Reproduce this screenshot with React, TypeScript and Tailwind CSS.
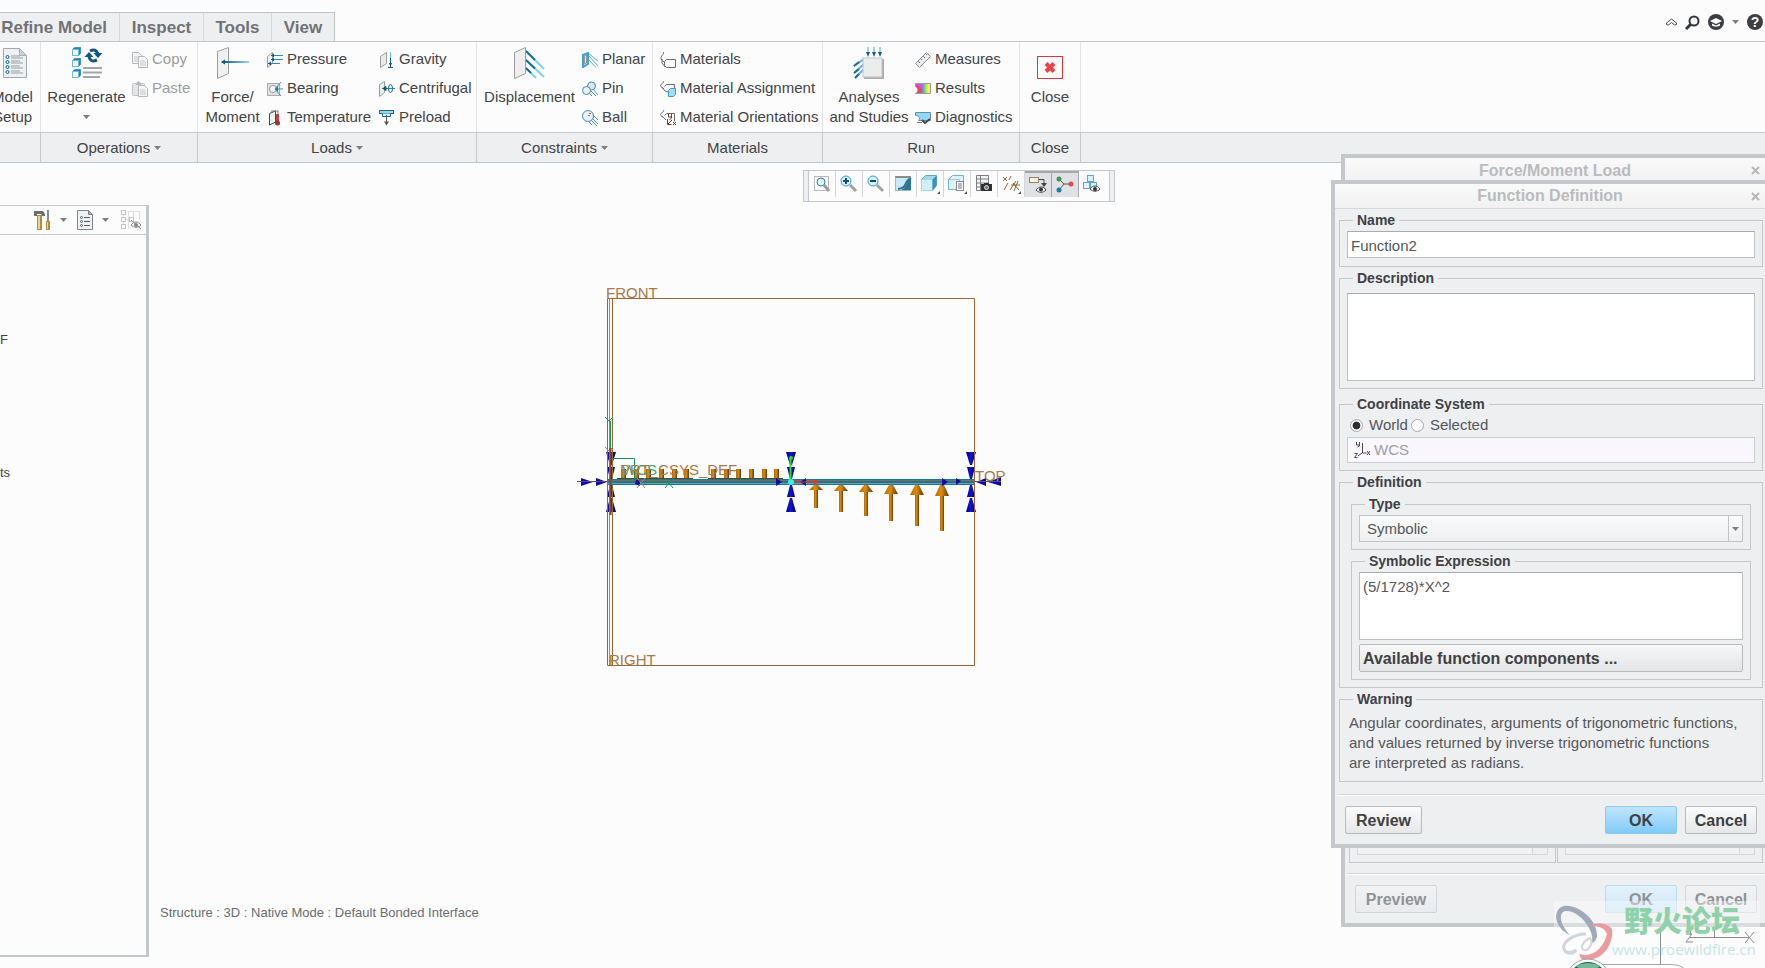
import type { ReactNode } from 'react';
import { clsx } from 'clsx';

const FONT = "font-['Liberation_Sans',Arial,sans-serif]";

/* ---------- small shared pieces ---------- */

function Caret({ className }: { className?: string }) {
  return (
    <svg width="7" height="4" viewBox="0 0 7 4" className={className} aria-hidden="true">
      <path d="M0 0h7L3.500 4z" fill="#7c7e80" />
    </svg>
  );
}

function Svg({ size = 16, children }: { size?: number; children: ReactNode }) {
  return (
    <svg width={size} height={size} viewBox={`0 0 ${size} ${size}`} fill="none" className="shrink-0" aria-hidden="true">
      {children}
    </svg>
  );
}

/* ---------- large ribbon icons ---------- */

const ModelSetupIcon = () => (
  <Svg size={32}>
    <path d="M6.500 1.500h16l7 7v22h-23z" fill="#eef1f4" stroke="#a4a8ac" />
    <path d="M22.500 1.500v7h7z" fill="#c3d6e2" stroke="#a4b4be" />
    {[10, 15, 20, 25].map((y) => (
      <g key={y}>
        <circle cx="10.500" cy={y} r="1.500" stroke="#0d5f8c" />
        <path d={`M14 ${y - 1}h9M14 ${y + 1}h12`} stroke="#9b9da0" />
      </g>
    ))}
  </Svg>
);

const RegenerateIcon = () => (
  <Svg size={32}>
    {[1, 12, 23].map((y) => (
      <g key={y}>
        <path d={`M1.500 ${y + 1.5}l2-2h6v6l-2 2`} fill="#2c84ad" stroke="#3b96c0" />
        <rect x="1.500" y={y + 1.5} width="6" height="6" fill="#eef9fe" stroke="#6dbbdc" />
      </g>
    ))}
    <path d="M19 4q6-3 8 3M26 13q-7 3-8-4" stroke="#12597f" strokeWidth="3" />
    <path d="M22.500 6h9L27 11zM13.500 10h9L18 5z" fill="#12597f" />
    <path d="M12 21h19M12 25.500h19M12 30h17" stroke="#a3a5a7" strokeWidth="2" />
  </Svg>
);

const ForceIcon = () => (
  <Svg size={32}>
    <defs>
      <linearGradient id="forceShaft" x1="0" x2="1">
        <stop offset="0" stopColor="#0d5678" />
        <stop offset="1" stopColor="#8fdcff" />
      </linearGradient>
    </defs>
    <path d="M.5 4.500l11-4v26l-11 5z" fill="#f0f0f1" stroke="#9a9c9e" />
    <rect x="5" y="14" width="27" height="2" fill="url(#forceShaft)" />
    <path d="M4 15l4-2.500v5z" fill="#0d5678" />
  </Svg>
);

const DisplacementIcon = () => (
  <Svg size={32}>
    <path d="M12 4l18 18M12 13l18 17M12 21l10 10" stroke="#7fcff3" strokeWidth="2" />
    <path d="M12 4l9 9M12 13l9 8.500M12 21l5 5" stroke="#1a6f97" strokeWidth="2" />
    <path d="M.5 5.500l11-5v26l-11 5z" fill="#eeeeef" stroke="#9a9c9e" />
  </Svg>
);

const AnalysesIcon = () => (
  <Svg size={32}>
    <path d="M1 19l10-7M1 26l10-9M2 31l9-9" stroke="#5fb2d8" strokeWidth="2" />
    <path d="M1 19l5-4M1 26l5-4M2 31l4-4" stroke="#1a6f97" strokeWidth="2" />
    {[15, 21, 27].map((x) => (
      <g key={x}>
        <path d={`M${x} 0v6`} stroke="#4ea4cc" />
        <path d={`M${x - 2} 5h4l-2 5z`} fill="#125f88" />
      </g>
    ))}
    <rect x="11" y="12" width="20" height="20" fill="#a9abad" />
    <rect x="10" y="11" width="19" height="19" fill="#ececed" stroke="#c2c4c6" />
  </Svg>
);

const CloseIcon = () => (
  <Svg size={32}>
    <rect x="3.500" y="9.500" width="25" height="22" fill="#fcfcfc" stroke="#d9393d" />
    <path d="M12 16.500l8 8M20 16.500l-8 8" stroke="#e84348" strokeWidth="4" />
  </Svg>
);

/* ---------- 16px ribbon icons ---------- */

const Page = ({ x = 0, y = 0 }: { x?: number; y?: number }) => (
  <g transform={`translate(${x} ${y})`}>
    <path d="M.5.5h6l3 3v8h-9z" fill="#f6f6f7" stroke="#b4b6b8" />
    <path d="M2 5h5M2 7h6M2 9h6" stroke="#c4c6c8" />
  </g>
);

const CopyIcon = () => (
  <Svg>
    <Page />
    <Page x={6} y={4} />
  </Svg>
);

const PasteIcon = () => (
  <Svg>
    <rect x=".5" y="2.500" width="12" height="12" rx="1" fill="#e4e5e6" stroke="#c0c2c4" />
    <path d="M4 4V2l2.500-2L9 2v2z" fill="#b8babc" />
    <Page x={6} y={4} />
  </Svg>
);

const PressureIcon = () => (
  <Svg>
    <path d="M.5 4.500l5-4v11l-5 4z" fill="#eee" stroke="#9a9c9e" />
    <path d="M4 3.500h12M4 7.500h12M1 11.500h12" stroke="#2d8bb6" />
    <path d="M4 3.500l3-2v4zM4 7.500l3-2v4zM1 11.500l3-2v4z" fill="#0f5577" />
  </Svg>
);

const BearingIcon = () => (
  <Svg>
    <rect x=".5" y="2.500" width="12" height="12" fill="#dfe0e2" stroke="#acaeb0" />
    <circle cx="6" cy="8" r="3.500" fill="#f8f8f8" stroke="#9a9c9e" />
    <path d="M8 8l6-7M8 8h8M8 8l6 7" stroke="#3695c0" />
    <path d="M8 8l3-3v6z" fill="#2b7ca3" />
  </Svg>
);

const TemperatureIcon = () => (
  <Svg>
    <path d="M2.500 3.500l6-2.500v11l-6 3z" fill="#f0f0f0" stroke="#155d80" />
    <path d="M4 1h7v3" stroke="#777" />
    <rect x="9" y="4" width="3" height="9" fill="#bb4740" />
    <circle cx="10.500" cy="13" r="2.500" fill="#a5332d" />
  </Svg>
);

const GravityIcon = () => (
  <Svg>
    <path d="M1.500 4.500l6-4v11l-6 4z" fill="#e9eaeb" stroke="#9a9c9e" />
    <path d="M11.500 0v10" stroke="#6cc0e8" />
    <path d="M11.500 6v9M9 15.500h5" stroke="#0f5577" />
    <path d="M10 11h3l-1.500 4z" fill="#0f5577" />
  </Svg>
);

const CentrifugalIcon = () => (
  <Svg>
    <path d="M.5 3.500l5-3v11l-5 4z" fill="#eee" stroke="#9a9c9e" />
    <path d="M3 7.500h13" stroke="#2d8bb6" />
    <path d="M4 7.500l3-2v4z" fill="#0f5577" stroke="#0f5577" />
    <ellipse cx="11.500" cy="7.500" rx="2" ry="4" stroke="#0f6a96" />
  </Svg>
);

const PreloadIcon = () => (
  <Svg>
    <rect x=".5" y=".5" width="14" height="3" fill="#9bd4ee" stroke="#176a92" />
    <path d="M3.500 3.500v3h8v-3" fill="#d8effa" stroke="#176a92" />
    <path d="M7.500 5v9" stroke="#555" />
    <path d="M5 11.500h5l-2.500 4z" fill="#555" />
  </Svg>
);

const PlanarIcon = () => (
  <Svg>
    <path d="M6 3l10 11M6 7l8 8.500M6 1l10 8" stroke="#4fb0dd" />
    <path d="M1 3l5-2v11l-5 3z" fill="#ddd" stroke="#3fa4d4" strokeWidth="2" />
    <path d="M2.500 4l2-1v8l-2 1z" fill="#ddd" stroke="#999" />
  </Svg>
);

const PinIcon = () => (
  <Svg>
    <path d="M8 9l6 6M11 8l5 6M5 10l5 5" stroke="#3b9ccb" />
    <circle cx="9.500" cy="5" r="4" fill="#dfe5e9" stroke="#3c8db4" />
    <circle cx="4.500" cy="9.500" r="4" fill="#eef1f3" stroke="#3c8db4" />
  </Svg>
);

const BallIcon = () => (
  <Svg>
    <path d="M10 8l6 6M9 10l6 6M6 11l4 4M12 6l4 4" stroke="#3b9ccb" />
    <circle cx="6" cy="6" r="5.500" fill="#eceff1" stroke="#3c8db4" />
    <path d="M7 3.500h2M6 5.500h2" stroke="#777" />
  </Svg>
);

const MaterialsIcon = () => (
  <Svg>
    <path d="M3.500 0c1 2-2 3-2.500 5.500S3 8.500 4 10M2 7v4l3 4" stroke="#6a6c6e" />
    <path d="M4.500 9.500l2-2h9v8h-9l-2-2z" fill="#fff" stroke="#6a6c6e" />
  </Svg>
);

const MaterialAssignIcon = () => (
  <Svg>
    <path d="M3.500 0c1 2-3 3-3 4.500S3 7 4 8M4.500 5.500l2-2h8v6M2 6l3 4 3 1" stroke="#6a6c6e" />
    <path d="M8.500 9.500l2-2h5v6l-2 2h-5z" fill="#9fdcf6" stroke="#3f9bc4" />
  </Svg>
);

const MaterialOrientIcon = () => (
  <Svg>
    <path d="M3.500 0c1 2-3 3-3 4.500S3 7 4 8M4.500 5.500l2-2h8v8M2 6l4 4" stroke="#6a6c6e" />
    <path d="M8.500 4v3h3M11.500 4v4l-2 2M7.500 9v5.500h4M8 14l4-4" stroke="#5a4326" />
    <path d="M13 12l3 3M16 12l-3 3" stroke="#444" />
  </Svg>
);

const MeasuresIcon = () => (
  <Svg>
    <path d="M.5 11.500l11-11 4 4-11 11z" fill="#e9eaec" stroke="#8f9193" />
    <path d="M3 9l2 2M5.500 6.500l1.500 1.500M8 4l2 2M10.500 1.500L12 3" stroke="#7a7c7e" />
  </Svg>
);

const ResultsIcon = () => (
  <Svg>
    <defs>
      <linearGradient id="fringe" x1="0" x2="1">
        <stop offset=".3" stopColor="#f23fd8" />
        <stop offset=".5" stopColor="#6c8df0" />
        <stop offset=".65" stopColor="#7fe36a" />
        <stop offset=".85" stopColor="#fdf04a" />
      </linearGradient>
    </defs>
    <path d="M.5 2.500h15v10H.500c3-2 3-5 0-7z" fill="url(#fringe)" stroke="#9a9c9e" />
    <path d="M1 5h2c4 1 5 4 3 7H2c2-2 2-4-1-7z" fill="#e64b5c" />
  </Svg>
);

const DiagnosticsIcon = () => (
  <Svg>
    <path d="M.5 2.500h15v8h-12c2-2 1-5-3-5z" fill="#8ed8f8" stroke="#6f8fa0" />
    <path d="M2 12.500h5" stroke="#777" />
    <path d="M7 10l3 3 5-4" stroke="#45484b" strokeWidth="2" />
  </Svg>
);

/* ---------- ribbon ---------- */

function BigButton({ icon, lines, caret, className }: { icon: ReactNode; lines: string[]; caret?: boolean; className?: string }) {
  return (
    <button type="button" className={clsx('flex shrink-0 flex-col items-center pt-[5px]', className)}>
      {icon}
      <span className="mt-2 flex flex-col items-center leading-5 whitespace-nowrap">
        {lines.map((l) => (
          <span key={l}>{l}</span>
        ))}
      </span>
      {caret && <Caret className="mt-2" />}
    </button>
  );
}

type Item = { icon: ReactNode; label: string; disabled?: boolean };

function SmallColumn({ items, className }: { items: Item[]; className?: string }) {
  return (
    <div className={clsx('flex shrink-0 flex-col pt-[3px]', className)}>
      {items.map((it) => (
        <button
          key={it.label}
          type="button"
          disabled={it.disabled}
          className="flex h-[29px] items-center gap-1 whitespace-nowrap disabled:text-[#9b9c9e]"
        >
          {it.icon}
          {it.label}
        </button>
      ))}
    </div>
  );
}

function Group({ label, menu, className, children }: { label?: string; menu?: boolean; className?: string; children: ReactNode }) {
  return (
    <section className={clsx('flex shrink-0 flex-col', className)} aria-label={label}>
      <div className="flex h-[90px] border-r border-[#e1e3e5]">{children}</div>
      <div className="flex h-[30px] items-center justify-center gap-1 border-t border-r border-[#c6cacd] bg-[#eeeff1] pt-px">
        {label}
        {menu && <Caret />}
      </div>
    </section>
  );
}

const TABS = [
  { label: 'Refine Model', className: 'w-[120px] pr-3 justify-end' },
  { label: 'Inspect', className: 'w-[84px] justify-center' },
  { label: 'Tools', className: 'w-[68px] justify-center' },
  { label: 'View', className: 'w-[62px] justify-center' },
];

function TopBar() {
  return (
    <header className="flex h-[41px] items-end justify-between">
      <nav className="flex h-[29px] overflow-hidden border-t border-r border-[#bfc3c6] bg-[#eeeff1]" aria-label="Ribbon tabs">
        {TABS.map((t) => (
          <button
            key={t.label}
            type="button"
            className={clsx('flex items-center border-r border-[#d8dadc] pt-px text-[17px] font-bold whitespace-nowrap text-[#717275] last:border-r-0', t.className)}
          >
            {t.label}
          </button>
        ))}
      </nav>
      <div className="flex h-[38px] items-center gap-2 pr-[2px]">
        <button type="button" aria-label="Minimize ribbon">
          <svg width="11" height="8" viewBox="0 0 11 8" fill="none" stroke="#45484b">
            <path d="M.5 5l5-4 5 4v1.500l-2 .5-3-2.500L2.500 7l-2-.5z" />
          </svg>
        </button>
        <button type="button" aria-label="Search">
          <svg width="15" height="15" viewBox="0 0 15 15" fill="none" stroke="#35373a">
            <circle cx="9" cy="6" r="4.500" strokeWidth="2" fill="#f4fbff" />
            <path d="M5.500 9.500L1 14" strokeWidth="3" />
          </svg>
        </button>
        <button type="button" aria-label="Learning" className="flex items-center gap-2">
          <svg width="16" height="16" viewBox="0 0 16 16">
            <circle cx="8" cy="8" r="8" fill="#3c3e41" />
            <path d="M2 7l6-3 6 3-6 3z" fill="#fff" />
            <path d="M4 9.500v2c2 1.500 6 1.500 8 0v-2L8 11.500z" fill="#fff" />
          </svg>
          <Caret />
        </button>
        <button type="button" aria-label="Help" className="flex size-4 items-center justify-center rounded-full bg-[#3c3e41] text-sm leading-4 font-bold text-white">
          ?
        </button>
      </div>
    </header>
  );
}

function Ribbon() {
  return (
    <div className="flex h-[122px] overflow-hidden border-y border-[#c3c7ca] text-[15px] text-[#424447]">
      <Group className="w-[41px] overflow-hidden">
        <div className="flex w-10 justify-end">
          <BigButton className="w-[55px]" icon={<ModelSetupIcon />} lines={['Model', 'Setup']} />
        </div>
      </Group>
      <Group label="Operations" menu className="w-[157px]">
        <BigButton className="w-[91px]" icon={<RegenerateIcon />} lines={['Regenerate']} caret />
        <SmallColumn
          items={[
            { icon: <CopyIcon />, label: 'Copy', disabled: true },
            { icon: <PasteIcon />, label: 'Paste', disabled: true },
          ]}
        />
      </Group>
      <Group label="Loads" menu className="w-[279px]">
        <BigButton className="w-[69px]" icon={<ForceIcon />} lines={['Force/', 'Moment']} />
        <SmallColumn
          className="w-[112px]"
          items={[
            { icon: <PressureIcon />, label: 'Pressure' },
            { icon: <BearingIcon />, label: 'Bearing' },
            { icon: <TemperatureIcon />, label: 'Temperature' },
          ]}
        />
        <SmallColumn
          items={[
            { icon: <GravityIcon />, label: 'Gravity' },
            { icon: <CentrifugalIcon />, label: 'Centrifugal' },
            { icon: <PreloadIcon />, label: 'Preload' },
          ]}
        />
      </Group>
      <Group label="Constraints" menu className="w-[176px]">
        <BigButton className="w-[105px]" icon={<DisplacementIcon />} lines={['Displacement']} />
        <SmallColumn
          items={[
            { icon: <PlanarIcon />, label: 'Planar' },
            { icon: <PinIcon />, label: 'Pin' },
            { icon: <BallIcon />, label: 'Ball' },
          ]}
        />
      </Group>
      <Group label="Materials" className="w-[170px]">
        <SmallColumn
          className="pl-[7px]"
          items={[
            { icon: <MaterialsIcon />, label: 'Materials' },
            { icon: <MaterialAssignIcon />, label: 'Material Assignment' },
            { icon: <MaterialOrientIcon />, label: 'Material Orientations' },
          ]}
        />
      </Group>
      <Group label="Run" className="w-[197px]">
        <BigButton className="w-[92px]" icon={<AnalysesIcon />} lines={['Analyses', 'and Studies']} />
        <SmallColumn
          items={[
            { icon: <MeasuresIcon />, label: 'Measures' },
            { icon: <ResultsIcon />, label: 'Results' },
            { icon: <DiagnosticsIcon />, label: 'Diagnostics' },
          ]}
        />
      </Group>
      <Group label="Close" className="w-[61px]">
        <BigButton className="w-[60px]" icon={<CloseIcon />} lines={['Close']} />
      </Group>
      <div className="flex flex-1 flex-col">
        <div className="h-[90px]" />
        <div className="flex-1 border-t border-[#c6cacd] bg-[#eeeff1]" />
      </div>
    </div>
  );
}

/* ---------- model tree panel ---------- */

function TreePanel() {
  return (
    <aside className="mt-[42px] mb-[11px] flex w-[149px] shrink-0 flex-col overflow-hidden border-t border-r-3 border-b-2 border-[#c4c8cc] text-[13px] text-[#424447]">
      <div className="flex h-[29px] shrink-0 items-center gap-2 border-b border-[#c4c8cc] pl-[33px]">
        <button type="button" aria-label="Tree tools" className="flex items-center gap-2">
          <svg width="19" height="20" viewBox="0 0 19 20">
            <path d="M1 1h9l2 3v2H9L8 4H4v2H1z" fill="#6a6d74" />
            <rect x="4" y="5" width="5" height="15" fill="#b98a3e" />
            <path d="M6 6v13" stroke="#ecd39a" strokeWidth="2" />
            <rect x="14" y="0" width="2" height="11" fill="#8a8d94" />
            <rect x="13" y="11" width="4" height="9" fill="#b98a3e" />
            <path d="M14.500 12v7" stroke="#ecd39a" />
          </svg>
          <Caret />
        </button>
        <button type="button" aria-label="Tree settings" className="ml-[2px] flex items-center gap-2">
          <svg width="17" height="20" viewBox="0 0 17 20" fill="none">
            <path d="M.5.500h11l4 4v15H.5z" fill="#eef3f6" stroke="#808488" />
            <path d="M11.500.5v4h4z" fill="#a9adb1" stroke="#808488" />
            {[7.5, 11.5, 15.5].map((y) => (
              <g key={y} stroke="#5a5d60">
                <circle cx="4.500" cy={y} r="1" />
                <path d={`M7 ${y}h6`} />
              </g>
            ))}
          </svg>
          <Caret />
        </button>
        <button type="button" aria-label="Hide tree items" className="ml-1 shrink-0">
          <svg width="22" height="20" viewBox="0 0 22 20" fill="none">
            <path d="M2.500 2v16M2.500 10h7M7 1.500h5M14 1.500h5M12.500 1v8M18.500 1v8M7.500 1v18" stroke="#dcdddf" />
            <rect x=".5" y=".5" width="4" height="4" fill="#fcfcfc" stroke="#c2c4c6" />
            <rect x=".5" y="7.500" width="4" height="4" fill="#fcfcfc" stroke="#c2c4c6" />
            <rect x="8.500" y="7.500" width="4" height="4" fill="#fcfcfc" stroke="#c2c4c6" />
            <rect x=".5" y="14.500" width="4" height="4" fill="#fcfcfc" stroke="#c2c4c6" />
            <path d="M10 15c3-4 7-4 10 0-3 3-7 3-10 0z" stroke="#858789" />
            <circle cx="15" cy="15" r="2" fill="#858789" />
            <path d="M10 10l10 9" stroke="#858789" />
          </svg>
        </button>
      </div>
      <ul className="pt-[95px] leading-5">
        <li>F</li>
        <li className="mt-[113px]">ts</li>
      </ul>
    </aside>
  );
}

/* ---------- graphics toolbar ---------- */

const Corner = () => <path d="M21 18v3h-3z" fill="#555" />;

const VIEW_TOOLS: { label: string; active?: boolean; icon: ReactNode }[] = [
  {
    label: 'Refit',
    icon: (
      <>
        <rect x="3.500" y="3.500" width="14" height="14" stroke="#b8babc" />
        <circle cx="10" cy="9" r="4" fill="#e6f6fd" stroke="#2c7ea6" />
        <path d="M13 12l5 6" stroke="#9a9c9e" strokeWidth="3" />
      </>
    ),
  },
  {
    label: 'Zoom in',
    icon: (
      <>
        <circle cx="8" cy="8" r="5" fill="#d7f0fb" stroke="#3c9cc8" />
        <path d="M5 8h6M8 5v6" stroke="#0f4f70" strokeWidth="2" />
        <path d="M12 12l6 6" stroke="#a0a2a4" strokeWidth="3" />
      </>
    ),
  },
  {
    label: 'Zoom out',
    icon: (
      <>
        <circle cx="8" cy="8" r="5" fill="#d7f0fb" stroke="#3c9cc8" />
        <path d="M5 8h6" stroke="#0f4f70" strokeWidth="2" />
        <path d="M12 12l6 6" stroke="#a0a2a4" strokeWidth="3" />
      </>
    ),
  },
  {
    label: 'Repaint',
    icon: (
      <>
        <rect x="3" y="3" width="16" height="15" fill="#c9ebf8" />
        <path d="M19 5v13H8l5-4q2-6 6-9z" fill="#2d7699" />
        <path d="M6 16q6-1 7-4 2-5 6-7" stroke="#2d7699" strokeWidth="2" />
        <path d="M3 4h16" stroke="#8a8d90" strokeWidth="2" />
        <path d="M3.500 4v13.500H19" stroke="#a5b5bd" />
      </>
    ),
  },
  {
    label: 'Display style',
    icon: (
      <>
        <path d="M2.500 6.500l4-4h11v10l-4 5h-11z" fill="#a5d8ee" stroke="#5aa9cb" />
        <rect x="2.500" y="6.500" width="11" height="11" fill="#d5effa" stroke="#a5d5e8" />
        <path d="M13.500 6.500l4-4v10l-4 5z" fill="#3d91b8" />
        <Corner />
      </>
    ),
  },
  {
    label: 'Saved orientations',
    icon: (
      <>
        <path d="M2.500 6.500l4-4h11v10l-4 4h-11z" fill="#dff2fa" stroke="#6cb7d8" />
        <path d="M2.500 6.500h11v10" stroke="#9ccde2" />
        <rect x="10.500" y="8.500" width="7" height="9" fill="#fff" stroke="#888a8d" />
        <path d="M12 11h4M12 13h4M12 15h4" stroke="#777" />
        <Corner />
      </>
    ),
  },
  {
    label: 'View manager',
    icon: (
      <>
        <path d="M3.500 2.500h12v15h-12zM3.500 6h12M3.500 10h12M3.500 14h12M7.500 2.500v15" fill="#f4f4f4" stroke="#7c7e80" />
        <rect x="8" y="11" width="11" height="7" fill="#2f3134" />
        <path d="M11 10h5v1h-5z" fill="#2f3134" />
        <circle cx="13.500" cy="14.500" r="2" fill="#777" stroke="#ddd" />
      </>
    ),
  },
  {
    label: 'Datum display',
    icon: (
      <>
        <path d="M3 4l4 4M7 4L3 8M11 3l-2 4M8 10l-4 7M10 17l6-9M18 8l-4 10M11 12h9M13 10l6 7" stroke="#8b6a35" />
        <Corner />
      </>
    ),
  },
  {
    label: 'Annotation display',
    active: true,
    icon: (
      <>
        <rect x="2.500" y="3.500" width="9" height="5" fill="#fdf3d8" stroke="#8c8471" />
        <path d="M12 5.500h5v5" stroke="#444" />
        <path d="M14 9h6l-3 4z" fill="#444" />
        <path d="M9 16c3-4 8-4 10 0-3 3-7 3-10 0z" fill="#fff" stroke="#444" />
        <circle cx="14" cy="15.500" r="2" fill="#333" />
      </>
    ),
  },
  {
    label: 'Simulation display',
    active: true,
    icon: (
      <>
        <path d="M5 5l5 5h7M10 10l-5 6" stroke="#555" />
        <circle cx="5" cy="5" r="2.500" fill="#3e9a4a" />
        <circle cx="17" cy="10" r="2.500" fill="#e0494d" />
        <circle cx="5" cy="16" r="2.500" fill="#2179a8" />
      </>
    ),
  },
  {
    label: 'Mesh display',
    icon: (
      <>
        <rect x="6.500" y="2.500" width="6" height="6" fill="#d9f0f9" stroke="#5fa9c8" />
        <rect x="2.500" y="9.500" width="6" height="6" fill="#e5f5fb" stroke="#5fa9c8" />
        <rect x="9.500" y="9.500" width="6" height="6" fill="#d9f0f9" stroke="#5fa9c8" />
        <path d="M9 16c3-4 7-4 10 0-3 3-7 3-10 0z" fill="#fff" stroke="#444" />
        <circle cx="14" cy="16" r="2" fill="#333" />
      </>
    ),
  },
];

function GraphicsToolbar() {
  return (
    <div className="ml-[3px] mt-[7px] flex h-8 self-center border border-[#c4c8cc] bg-[#fcfcfc]" role="toolbar" aria-label="Graphics">
      <div className="w-[5px] border-r border-[#c4c8cc] bg-[#eeeff1]" />
      {VIEW_TOOLS.map((t) => (
        <button
          key={t.label}
          type="button"
          aria-label={t.label}
          aria-pressed={t.active}
          className={clsx(
            'mb-1 flex items-center justify-center border-r',
            t.active ? 'w-[27px] border-t-2 border-[#a4a8ac] bg-[#dfe1e4]' : 'w-[27px] border-[#d3d6d8] last-of-type:border-r-0',
          )}
        >
          <svg width="22" height="22" viewBox="0 0 22 22" fill="none" aria-hidden="true">
            {t.icon}
          </svg>
        </button>
      ))}
      <div className="ml-[3px] w-[5px] border-l border-[#c4c8cc] bg-[#eeeff1]" />
    </div>
  );
}

/* ---------- model drawing ---------- */

const SUPPORTS = [611, 791, 971];
const STUBS = [623, 636, 648, 661, 674, 686, 713, 726, 738, 751, 764, 776];
const LOADS = [
  { x: 816, head: 490, end: 508 },
  { x: 841, head: 491, end: 512 },
  { x: 866, head: 492, end: 516 },
  { x: 891, head: 494, end: 521 },
  { x: 917, head: 495, end: 526 },
  { x: 942, head: 496, end: 531 },
];

function ModelDrawing() {
  return (
    <svg
      width="440"
      height="400"
      viewBox="570 280 440 400"
      fill="none"
      className="absolute top-[117px] left-[421px]"
      role="img"
      aria-label="Beam model with loads and constraints"
    >
      <defs>
        <linearGradient id="shaft" x1="0" x2="1">
          <stop offset="0" stopColor="#b06a00" />
          <stop offset=".45" stopColor="#e08a0c" />
          <stop offset="1" stopColor="#5e3600" />
        </linearGradient>
        <linearGradient id="cone" x1="0" x2="1">
          <stop offset="0" stopColor="#000070" />
          <stop offset=".45" stopColor="#1414d6" />
          <stop offset="1" stopColor="#000060" />
        </linearGradient>
      </defs>

      {/* constraints */}
      {SUPPORTS.map((x) => (
        <g key={x} fill="url(#cone)">
          <path d={`M${x - 5} 452h10l-4 13h-2z`} />
          <path d={`M${x - 4} 467h8l-3 12h-2z`} />
          <path d={`M${x - 1} 485h2l3 12h-8z`} />
          <path d={`M${x - 1} 498h2l4 14h-10z`} />
        </g>
      ))}

      {/* datum planes */}
      <path d="M609.500 299v366" stroke="#8c8c8c" />
      <path d="M607.500 298.500h367v367h-367zM612.500 298.500v367" stroke="#9c6634" />

      {/* distributed load, left half */}
      {STUBS.map((x) => (
        <rect key={x} x={x - 2} y="469" width="5" height="10" fill="url(#shaft)" />
      ))}
      <path d="M617 478.500h76M708 478.500h75" stroke="#6b3e06" />

      {/* beam */}
      <rect x="608" y="479" width="366" height="6" fill="#117a9e" />
      <path d="M608 480.500h366" stroke="#8d6a45" />
      <path d="M608 483.500h366" stroke="#7b9aa6" />

      {/* loads, right half */}
      {LOADS.map((l) => (
        <g key={l.x} fill="url(#shaft)">
          <rect x={l.x - 2} y={l.head} width="4" height={l.end - l.head} />
          <path d={`M${l.x - 2} 485h4l5 ${l.head - 485}h-14z`} />
        </g>
      ))}

      {/* horizontal constraints */}
      <g fill="#0c0ca8">
        <path d="M581 478l12 4-12 4zM596 478l11 4-11 4z" />
        <path d="M776 478l6 4-6 4zM806 478l-6 4 6 4zM636 480h4v6l-5-2zM942 478l6 4-6 4zM956 478l5 3-5 4z" />
        <path d="M986 478v8l-10-4zM1001 477v9l-13-4z" />
      </g>
      <path d="M577 481.500h30M975 481.500h26" stroke="#5a4a80" />

      {/* coordinate systems */}
      <g stroke="#129160">
        <path d="M610.500 421v27M605 417l4 4M613 417l-4 4M611 458.500h23.500v21M645 482.500h25M665 478l8 10M673 478l-8 10" />
      </g>
      <path d="M605 447l4 4M613 447l-4 4M637 478l8 10M645 478l-8 10" stroke="#8c8c8c" />
      <path d="M610.500 448v67" stroke="#7b4a30" strokeWidth="2" />
      <path d="M791 482h25" stroke="#f0302a" />
      <circle cx="815" cy="482" r="2" fill="#f0302a" />
      <path d="M790.500 458v24" stroke="#22e022" strokeWidth="2" />
      <circle cx="791" cy="458" r="2" fill="#22e022" />
      <circle cx="791" cy="482" r="3" fill="#30f0f8" />

      <g className="font-['Liberation_Sans',Arial,sans-serif] text-[15px]" fill="#a9784b">
        <text x="606" y="298">FRONT</text>
        <text x="609" y="665">RIGHT</text>
        <text x="975" y="481">TOP</text>
        <text x="622" y="475" fill="#3aa57c">WCS</text>
        <text x="620" y="475">PRT_CSYS_DEF</text>
      </g>
    </svg>
  );
}

/* ---------- dialogs ---------- */

function TitleBar({ title, className }: { title: string; className?: string }) {
  return (
    <div className={clsx('flex items-center bg-linear-to-b from-[#fafafa] to-[#f1f1f2] pr-[5px] text-base font-bold text-[#b9bbbd]', className)}>
      <span className="w-[14px]" />
      <h2 className="flex-1 text-center leading-5">{title}</h2>
      <button type="button" aria-label={`Close ${title}`} className="flex w-[9px]">
        <svg width="9" height="9" viewBox="0 0 9 9" stroke="#b4b6b8" strokeWidth="2" aria-hidden="true">
          <path d="M1 1l7 7M8 1L1 8" />
        </svg>
      </button>
    </div>
  );
}

/* padding sits on the inner box so every legend starts at the same inset */
function Fieldset({ legend, className, children }: { legend: string; className?: string; children: ReactNode }) {
  return (
    <fieldset className="min-w-0 border border-[#c4c8cb]">
      <legend className="ml-[13px] px-1 text-sm leading-4 font-bold text-[#3f4144]">{legend}</legend>
      <div className={className}>{children}</div>
    </fieldset>
  );
}

function DialogButton({ children, primary, disabled, className }: { children: ReactNode; primary?: boolean; disabled?: boolean; className?: string }) {
  return (
    <button
      type="button"
      disabled={disabled}
      className={clsx(
        'h-7 rounded-[2px] border pt-px text-center text-base leading-5 font-bold text-[#3f4144] disabled:text-[#909294]',
        primary
          ? 'border-[#8ccaf0] bg-linear-to-b from-[#bfe5fd] to-[#80cbf9] disabled:border-[#bcdcee] disabled:from-[#e3f2fb] disabled:to-[#cde7f7]'
          : 'border-[#b8bbbe] bg-linear-to-b from-[#fbfbfb] to-[#e6e7e8] disabled:border-[#d3d6d8] disabled:from-[#f1f2f3] disabled:to-[#eaebed]',
        className,
      )}
    >
      {children}
    </button>
  );
}

const FIELD = 'block w-full resize-none rounded-none border border-[#bcbfc2] border-t-[#a9acaf] bg-white px-[3px] text-[15px] leading-5 text-[#55575a] outline-none';
const RADIO = 'size-[13px] appearance-none rounded-full border border-[#a5a8ab] bg-white checked:bg-[radial-gradient(circle,#2b2d30_45%,#fff_55%)]';

function FunctionDialog() {
  return (
    <section
      role="dialog"
      aria-label="Function Definition"
      className="absolute top-[180px] right-0 w-[434px] border-y-4 border-l-4 border-[#c4c8cc] bg-[#eeeff1]"
    >
      <TitleBar title="Function Definition" className="h-[25px] border-b border-[#d6d8da]" />
      <div className="flex flex-col gap-[3px] pt-[3px] pr-[2px] pl-1">
        <Fieldset legend="Name" className="px-[7px] pt-[3px] pb-2">
          <input aria-label="Name" defaultValue="Function2" className={clsx(FIELD, 'h-[27px] pt-px')} />
        </Fieldset>
        <Fieldset legend="Description" className="px-[7px] py-[7px]">
          <textarea aria-label="Description" className={clsx(FIELD, 'h-[88px]')} />
        </Fieldset>
        <div className="h-px" />
        <Fieldset legend="Coordinate System" className="px-[7px] pt-[3px] pb-[7px]">
          <div className="mb-[2px] flex h-5 items-center gap-[3px] pl-[3px] text-[15px] text-[#55575a]">
            <label className="flex items-center gap-[6px]">
              <input type="radio" name="csys" defaultChecked className={RADIO} />
              World
            </label>
            <label className="flex items-center gap-[6px]">
              <input type="radio" name="csys" className={RADIO} />
              Selected
            </label>
          </div>
          <div className="flex h-[26px] items-center gap-[3px] border border-[#c9ccd0] bg-[#f9f6fe] pl-[6px]">
            <svg width="17" height="17" viewBox="0 0 17 17" fill="none" stroke="#4a4c4f" aria-hidden="true">
              <path d="M2.500 0v3h3M5.500 0v4l-2 1M8.500 1v10h4M8 11l-4 3M.500 11.500h3l-3 4h3M13 9l3 4M16 9l-3 4" />
            </svg>
            <input aria-label="Coordinate system" disabled defaultValue="WCS" className="min-w-0 flex-1 bg-transparent pt-px text-[15px] text-[#9fa0a4]" />
          </div>
        </Fieldset>
        <Fieldset legend="Definition" className="flex flex-col gap-[3px] px-[11px] pt-[6px] pb-[7px]">
          <Fieldset legend="Type" className="px-[7px] pt-[3px] pb-[7px]">
            <div className="relative">
              <select aria-label="Type" className="block h-[27px] w-full appearance-none rounded-none border border-[#c0c4c7] bg-linear-to-b from-[#fbfbfb] to-[#eeeff0] pt-px pl-[7px] text-[15px] text-[#55575a]">
                <option>Symbolic</option>
              </select>
              <span className="pointer-events-none absolute inset-y-px right-px flex w-[14px] items-center justify-center border-l border-[#c0c4c7]">
                <Caret />
              </span>
            </div>
          </Fieldset>
          <Fieldset legend="Symbolic Expression" className="px-[7px] pt-[3px] pb-[7px]">
            <textarea aria-label="Symbolic Expression" defaultValue="(5/1728)*X^2" className={clsx(FIELD, 'h-[68px] pt-1')} />
            <button
              type="button"
              className="mt-1 block h-7 w-full rounded-[2px] border border-[#b8bbbe] bg-linear-to-b from-[#f7f7f7] to-[#e4e5e6] pt-px pl-[3px] text-left text-base leading-5 font-bold text-[#3f4144]"
            >
              Available function components ...
            </button>
          </Fieldset>
        </Fieldset>
        <Fieldset legend="Warning" className="px-[9px] pt-[6px] pb-2">
          <p className="text-[15px] leading-5 whitespace-nowrap text-[#55575a]">
            Angular coordinates, arguments of trigonometric functions,
            <br />
            and values returned by inverse trigonometric functions
            <br />
            are interpreted as radians.
          </p>
        </Fieldset>
      </div>
      <div className="mt-3 ml-[2px] flex gap-2 border-t border-[#d3d5d7] px-2 pt-[11px] pb-[10px] shadow-[inset_0_1px_0_#fff]">
        <DialogButton className="w-[77px]">Review</DialogButton>
        <DialogButton primary className="ml-auto w-[72px]">OK</DialogButton>
        <DialogButton className="w-[72px]">Cancel</DialogButton>
      </div>
    </section>
  );
}

function LoadDialog() {
  return (
    <section
      role="dialog"
      aria-label="Force/Moment Load"
      className="absolute top-[154px] right-0 flex h-[773px] w-[424px] flex-col border-y-4 border-l-4 border-[#c4c8cc] bg-[#eeeff1]"
    >
      <TitleBar title="Force/Moment Load" className="h-[25px]" />
      <div className="flex flex-1 gap-px pr-[2px] pl-1">
        {['direction', 'magnitude'].map((k) => (
          <div key={k} className="flex flex-1 border border-[#c4c8cb] p-[7px]">
            <div className="flex-1 border border-[#d6d9db] bg-[#f1f2f3]" />
            <div className="w-[15px] border-y border-r border-[#d6d9db]" />
          </div>
        ))}
      </div>
      <div className="mt-[10px] ml-[2px] flex gap-2 border-t border-[#d3d5d7] px-2 pt-[11px] pb-[10px] shadow-[inset_0_1px_0_#fff]">
        <DialogButton disabled className="w-[82px]">Preview</DialogButton>
        <DialogButton disabled primary className="ml-auto w-[72px]">OK</DialogButton>
        <DialogButton disabled className="w-[72px]">Cancel</DialogButton>
      </div>
    </section>
  );
}

/* ---------- forum mark and view triad ---------- */

function CornerMark() {
  return (
    <svg width="220" height="73" viewBox="1545 895 220 73" fill="none" className="pointer-events-none absolute right-0 bottom-0" role="img" aria-label="Forum mark">
      <rect x="1554" y="901" width="206" height="67" fill="#fcfcfc" fillOpacity=".4" />
      <path d="M1660.500 927v38M1690.500 927v8M1714.500 927v10M1690 937.500h60" stroke="#8c8e90" />
      <path d="M1686 934h6l-6 8h7M1745 932l9 11M1754 932l-9 11" stroke="#8c8e90" />

      <path d="M1570 935c-14-6-18-22-9-28 12-6 36 10 36 28 0 4-2 7-5 8 3-14-14-33-26-32-9 1-5 15 4 24z" fill="#9fabb8" />
      <path d="M1590 925c10-3 18-1 22 4 2 14-8 30-24 31-8 0-9-4-8-6 12 4 24-6 27-20-2-6-8-8-17-9z" fill="#eb9a9e" />
      <path d="M1586 934c-14 0-24 9-22 15 1 5 8 4 12 1-2 4-10 5-12-1" stroke="#cfd5db" strokeWidth="3" />
      <path d="M1590 938c4 6-2 13-6 12-4-2-2-8 6-12z" stroke="#d3d7dc" strokeWidth="2" />

      <path d="M1600 964.500h70q10 0 14 4" stroke="#a2a4a6" />
      <circle cx="1588" cy="981" r="22" fill="#fff" stroke="#9b9d9f" />
      <circle cx="1588" cy="981" r="19" fill="#16704c" />
      <path d="M1576 966q12-6 24 0l-4 3h-16z" fill="#78b89c" />

      <text x="1624" y="932" fill="#8fd2aa" className="font-['Liberation_Sans','Noto_Sans_CJK_SC',sans-serif] text-[29px] font-black">
        野火论坛
      </text>
      <text x="1612" y="955" fill="#c5e6e4" className="font-['Open_Sans','Noto_Sans',sans-serif] text-[15px]">
        www.proewildfire.cn
      </text>
    </svg>
  );
}

export default function App() {
  return (
    <div className={clsx('relative flex min-h-screen flex-col overflow-hidden bg-[#fcfcfc]', FONT)}>
      <TopBar />
      <Ribbon />
      <main className="flex flex-1">
        <TreePanel />
        <div className="relative flex min-w-0 flex-1 flex-col">
          <GraphicsToolbar />
          <ModelDrawing />
          <p className="mt-auto mb-[45px] pl-[11px] text-[13px] leading-5 text-[#6a6c6e]">
            Structure : 3D : Native Mode : Default Bonded Interface
          </p>
        </div>
      </main>
      <LoadDialog />
      <FunctionDialog />
      <CornerMark />
    </div>
  );
}
